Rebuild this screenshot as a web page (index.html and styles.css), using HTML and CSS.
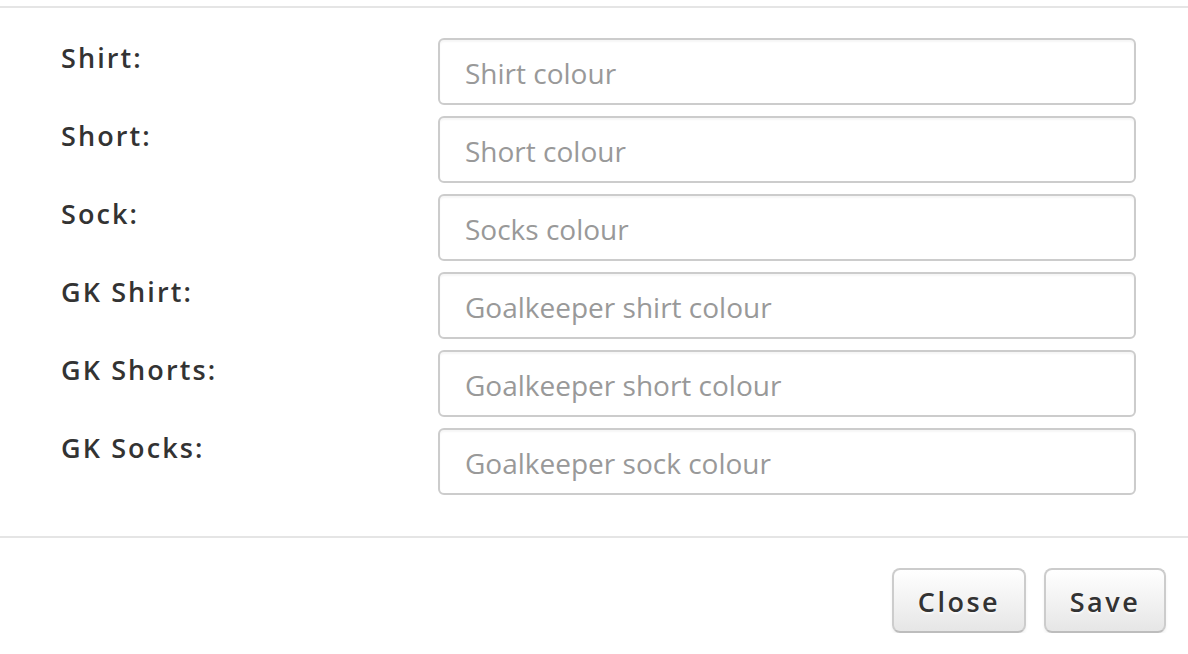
FILE: index.html
```html
<!DOCTYPE html>
<html>
<head>
<meta charset="utf-8">
<link rel="stylesheet" href="styles.css">
</head>
<body>
<div class="modal">
  <div class="modal-header"></div>
  <div class="modal-body">
    <div class="form-row">
      <label class="form-label">Shirt:</label>
      <input class="form-input" type="text" placeholder="Shirt colour">
    </div>
    <div class="form-row">
      <label class="form-label">Short:</label>
      <input class="form-input" type="text" placeholder="Short colour">
    </div>
    <div class="form-row">
      <label class="form-label">Sock:</label>
      <input class="form-input" type="text" placeholder="Socks colour">
    </div>
    <div class="form-row">
      <label class="form-label">GK Shirt:</label>
      <input class="form-input" type="text" placeholder="Goalkeeper shirt colour">
    </div>
    <div class="form-row">
      <label class="form-label">GK Shorts:</label>
      <input class="form-input" type="text" placeholder="Goalkeeper short colour">
    </div>
    <div class="form-row">
      <label class="form-label">GK Socks:</label>
      <input class="form-input" type="text" placeholder="Goalkeeper sock colour">
    </div>
  </div>
  <div class="modal-footer">
    <button class="btn btn-close" type="button">Close</button>
    <button class="btn btn-save" type="button">Save</button>
  </div>
</div>
</body>
</html>
```
FILE: styles.css
```css
html, body {
  margin: 0;
  padding: 0;
  background: #fff;
}

body {
  font-family: "Open Sans", "Liberation Sans", sans-serif;
  color: #333;
}

.modal {
  width: 1188px;
}

.modal-header {
  height: 6px;
}

.modal-body {
  border-top: 2px solid #e5e5e5;
  padding: 30px 0 41px 61px;
  display: flex;
  flex-direction: column;
  gap: 11px;
}

.form-row {
  display: grid;
  grid-template-columns: 377px 698px;
  height: 67px;
}

.form-label {
  font-size: 27px;
  font-weight: 600;
  letter-spacing: 2.1px;
  line-height: 36px;
  padding-top: 2px;
  color: #333;
}

.form-input {
  box-sizing: border-box;
  height: 67px;
  width: 698px;
  margin: 0;
  border: 2px solid #ccc;
  border-radius: 6px;
  padding: 3px 25px 0;
  font-family: "Open Sans", "Liberation Sans", sans-serif;
  font-size: 28px;
  color: #555;
  background: #fff;
  box-shadow: inset 0 2px 2px rgba(0, 0, 0, 0.04);
  outline: none;
}

.form-input::placeholder {
  color: #999;
  opacity: 1;
}

.modal-footer {
  border-top: 2px solid #e5e5e5;
  padding: 30px 22px 0 0;
  display: flex;
  justify-content: flex-end;
  gap: 18px;
}

.btn {
  box-sizing: border-box;
  height: 65px;
  margin: 0;
  border: 2px solid #ccc;
  border-bottom-color: #bdbdbd;
  border-radius: 8px;
  background: linear-gradient(to bottom, #ffffff, #e6e6e6);
  box-shadow: 0 2px 3px rgba(0, 0, 0, 0.06);
  font-family: "Open Sans", "Liberation Sans", sans-serif;
  font-size: 27px;
  font-weight: 600;
  letter-spacing: 2.5px;
  color: #333;
  text-shadow: 0 2px 2px rgba(255, 255, 255, 0.75);
  padding: 2px 0 0;
  cursor: pointer;
}

.btn-close {
  width: 134px;
}

.btn-save {
  width: 122px;
}
```
